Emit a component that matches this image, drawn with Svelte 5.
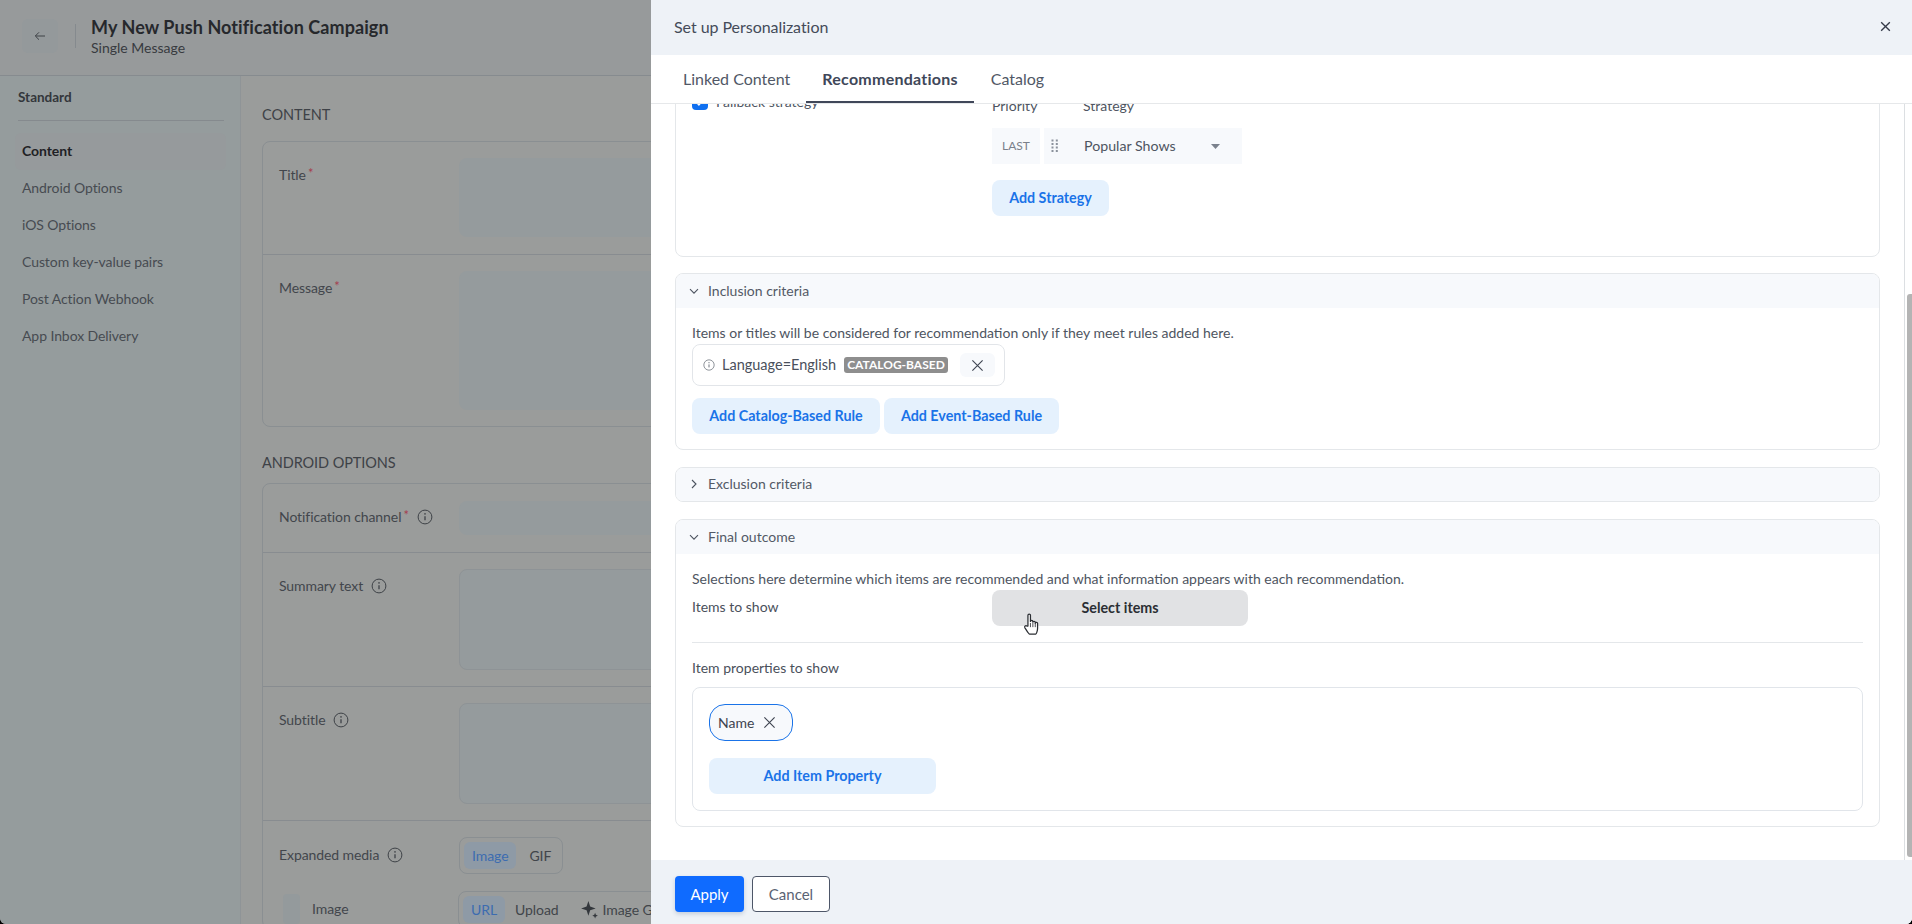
<script>
  const navItems = ['Content', 'Android Options', 'iOS Options', 'Custom key-value pairs', 'Post Action Webhook', 'App Inbox Delivery'];
  const tabs = ['Linked Content', 'Recommendations', 'Catalog'];
</script>

{#snippet info(size)}
  <svg class="info" width={size} height={size} viewBox="0 0 16 16" fill="none" stroke="currentColor">
    <circle cx="8" cy="8" r="6.9" stroke-width="1"/>
    <path d="M8 7.2v4" stroke-width="1.3"/>
    <circle cx="8" cy="4.9" r=".8" fill="currentColor" stroke="none"/>
  </svg>
{/snippet}

{#snippet cross(size, cls)}
  <svg class={cls} width={size} height={size} viewBox="0 0 14 14" fill="none" stroke="currentColor">
    <path d="M1.5 1.5l11 11M12.5 1.5l-11 11"/>
  </svg>
{/snippet}

{#snippet chevron(open)}
  <svg class="chev" width="12" height="12" viewBox="0 0 12 12" fill="none" stroke="currentColor" stroke-width="1.1">
    {#if open}<path d="M2 4.2l4 4 4-4"/>{:else}<path d="M4 2l4 4-4 4"/>{/if}
  </svg>
{/snippet}

<div class="page">
  <div class="base">
    <header class="top">
      <button class="back" aria-label="Back">
        <svg width="12" height="12" viewBox="0 0 12 12" fill="none" stroke="currentColor" stroke-width="1">
          <path d="M11 6H1.5M5 2.3L1.3 6 5 9.7"/>
        </svg>
      </button>
      <span class="vr"></span>
      <div class="titles">
        <div class="title">My New Push Notification Campaign</div>
        <div class="sub">Single Message</div>
      </div>
    </header>
    <div class="under">
      <aside class="side">
        <div class="side-h">Standard</div>
        <nav>
          {#each navItems as item, i}
            <div class="nav" class:active={i === 0}>{item}</div>
          {/each}
        </nav>
      </aside>
      <main class="main">
        <h2 class="sec first">CONTENT</h2>
        <section class="card">
          <div class="row r1"><div class="lab">Title<i>*</i></div><div class="inp h79"></div></div>
          <div class="row r2"><div class="lab">Message<i>*</i></div><div class="inp h139"></div></div>
        </section>
        <h2 class="sec second">ANDROID OPTIONS</h2>
        <section class="card">
          <div class="row r3"><div class="lab l6">Notification channel<i>*</i><span class="ic">{@render info(16)}</span></div><div class="inp h34"></div></div>
          <div class="row r2"><div class="lab">Summary text<span class="ic">{@render info(16)}</span></div><div class="inp line h101"></div></div>
          <div class="row r2"><div class="lab">Subtitle<span class="ic">{@render info(16)}</span></div><div class="inp line h101"></div></div>
          <div class="row r4">
            <div class="lab l8">Expanded media<span class="ic">{@render info(16)}</span></div>
            <div class="seg"><span class="on">Image</span><span>GIF</span></div>
          </div>
          <div class="row r5">
            <div class="lab2"><span class="sq"></span>Image</div>
            <div class="seg wide"><span class="on">URL</span><span>Upload</span>
              <span class="gen">
                <svg width="19" height="19" viewBox="0 0 17 17" fill="#33373c"><path d="M7.5 1l1.6 4.900L14 7.500 9.100 9.100 7.500 14 5.900 9.100 1 7.500l4.900-1.600z"/><path d="M13.500 11.500l.7 1.800 1.800.7-1.800.7-.7 1.800-.7-1.800-1.800-.7 1.800-.7z"/></svg>
                Image Generator
              </span>
            </div>
          </div>
        </section>
      </main>
    </div>
  </div>

  <div class="drawer">
    <div class="d-head">
      <span>Set up Personalization</span>
      {@render cross(11, 'close')}
    </div>
    <div class="d-tabs">
      {#each tabs as t, i}
        <div class="tab" class:sel={i === 1}>{t}</div>
      {/each}
    </div>
    <div class="d-body">
      <div class="scroll">
        <section class="box strat">
          <div class="fallback">
            <span class="check">
              <svg width="12" height="12" viewBox="0 0 12 12" fill="none" stroke="#fff" stroke-width="1.8"><path d="M2.500 6.200l2.400 2.400 4.600-5"/></svg>
            </span>
            Fallback strategy
          </div>
          <div class="strat-r">
            <div class="cols"><span class="c1">Priority</span><span>Strategy</span></div>
            <div class="pick">
              <span class="last">LAST</span>
              <span class="sel-box">
                <svg class="dots" width="8" height="16" viewBox="0 0 8 16" fill="#8b929c">
                  {#each [1.500, 5, 8.500, 12] as y}<rect x="0.5" {y} width="2" height="2"/><rect x="4.800" {y} width="2" height="2"/>{/each}
                </svg>
                <span class="opt">Popular Shows</span>
                <svg class="caret" width="9" height="5" viewBox="0 0 9 5" fill="#7b828d"><path d="M0 0h9L4.500 5z"/></svg>
              </span>
            </div>
            <button class="btn soft strat-btn">Add Strategy</button>
          </div>
        </section>

        <section class="box">
          <div class="box-h">{@render chevron(true)}Inclusion criteria</div>
          <div class="box-b inc">
            <p>Items or titles will be considered for recommendation only if they meet rules added here.</p>
            <div class="rule">
              <span class="ri">{@render info(12)}</span>
              <span class="rt">Language=English</span>
              <span class="badge">CATALOG-BASED</span>
              <span class="rx">{@render cross(13, 'x')}</span>
            </div>
            <div class="btns">
              <button class="btn soft w188">Add Catalog-Based Rule</button>
              <button class="btn soft w175">Add Event-Based Rule</button>
            </div>
          </div>
        </section>

        <section class="box">
          <div class="box-h shut">{@render chevron(false)}Exclusion criteria</div>
        </section>

        <section class="box">
          <div class="box-h">{@render chevron(true)}Final outcome</div>
          <div class="box-b final">
            <p>Selections here determine which items are recommended and what information appears with each recommendation.</p>
            <div class="items">
              <span>Items to show</span>
              <button class="btn grey">Select items</button>
            </div>
            <hr />
            <div class="prop-l">Item properties to show</div>
            <div class="props">
              <span class="pill">Name{@render cross(13, 'px')}</span>
              <button class="btn soft add">Add Item Property</button>
            </div>
          </div>
        </section>
      </div>
      <div class="track"><span class="thumb"></span></div>
    </div>
    <div class="d-foot">
      <button class="apply">Apply</button>
      <button class="cancel">Cancel</button>
    </div>
    <svg class="hand" width="17" height="22" viewBox="0 0 16 21" fill="#fff" stroke="#2b2e33" stroke-width="1.2" stroke-linejoin="round">
      <path d="M4.600 12.500V2.200c0-1.600 2.400-1.600 2.400 0V8c0-1.200 2.300-1.200 2.300 0v.8c0-1.200 2.300-1.200 2.300 0v.9c0-1.100 2.200-1.100 2.200.2v4.600c0 2.500-1.200 5.600-1.700 5.600H6.200c-1 0-3-3.800-4.500-6-.9-1.400.8-2.800 2-1.600z"/>
      <path d="M7 9.500v4M9.300 9.500v4M11.600 9.500v4" fill="none" stroke-width=".8"/>
    </svg>
  </div>
</div>

<style>
  :global(html), :global(body) { margin: 0; background: #000; }
  * { box-sizing: border-box; }
  .page {
    position: relative; width: 1912px; height: 924px; overflow: hidden;
    border-radius: 0 0 6px 6px;
    font: 14px/20px Lato, "Open Sans", sans-serif; background: #999c9c; color: #42464c;
  }
  button { font: inherit; cursor: pointer; border: 0; }

  .base { height: 100%; display: flex; flex-direction: column; }
  .top { height: 76px; flex: none; display: flex; align-items: center; padding: 0 0 4px 22px; background: #979a9b; border-bottom: 1px solid #868b8f; }
  .back { width: 36px; height: 34px; background: #94999b; border-radius: 6px; color: #3e4247; display: flex; align-items: center; justify-content: center; padding: 0; margin-right: 17px; }
  .vr { width: 1px; height: 24px; background: #858a8e; margin-right: 15px; }
  .title { font-size: 18px; line-height: 24px; font-weight: 700; color: #26282c; margin-top: 2px; letter-spacing: .08px; }
  .sub { color: #383b40; font-size: 14px; line-height: 20px; margin-top: -1px; }
  .under { flex: 1; display: flex; min-height: 0; }
  .side { width: 241px; flex: none; background: #959c9d; border-right: 1px solid #8f9497; padding: 11px 18px 0 15px; }
  .side-h { margin-left: 3px; font-weight: 700; font-size: 13.500px; color: #33363b; height: 34px; border-bottom: 1px solid #858a8e; width: 206px; }
  nav { margin-top: 12px; }
  .nav { height: 37px; line-height: 36px; padding-left: 7px; color: #474b51; width: 211px; letter-spacing: -.08px; }
  .nav.active { background: #969a9c; font-weight: 700; color: #1f2125; border-radius: 6px; }
  .main { flex: 1; padding: 29px 0 0 21px; background: #9a9c9b; min-width: 0; letter-spacing: -.08px; }
  .sec { margin: 0; font-size: 14.500px; line-height: 20px; font-weight: 400; color: #3e4247; }
  .sec.first { margin-bottom: 16px; }
  .sec.second { margin: 26px 0 10px; }
  .card { border: 1px solid #8a8f92; border-radius: 8px; margin-right: 20px; }
  .row { display: grid; grid-template-columns: 180px 1fr; padding: 16px; border-bottom: 1px solid #888c90; }
  .row:last-child { border-bottom: 0; }
  .r1 { height: 113px; }
  .r2 { padding-bottom: 16px; }
  .r3 { height: 69px; padding-top: 17px; }
  .r4 { padding-bottom: 17px; border-bottom: 0; }
  .r5 { padding: 0 16px 0 16px; grid-template-columns: 179px 1fr; }
  .lab { padding-top: 7px; color: #42464c; display: flex; align-items: flex-start; }
  .lab.l6 { padding-top: 6px; }
  .lab.l8 { padding-top: 8px; }
  .lab i { color: #a5404f; font-style: normal; margin-left: 2px; font-size: 13px; line-height: 16px; }
  .ic { margin-left: 8px; color: #3e4247; display: inline-flex; margin-top: 2px; }
  .inp { background: #959b9d; border-radius: 8px; }
  .inp.line { border: 1px solid #8e9396; }
  .h79 { height: 79px; } .h139 { height: 139px; } .h34 { height: 34px; } .h101 { height: 101px; }
  .seg { display: inline-flex; align-items: center; gap: 13px; border: 1px solid #8a8f92; border-radius: 8px; height: 37px; width: 104px; padding: 0 11px 0 4px; color: #41454a; white-space: nowrap; }
  .seg .on { background: #8e9aa6; color: #3c6cb0; border-radius: 6px; height: 27px; line-height: 27px; padding: 0 8px; }
  .seg.wide { width: 400px; gap: 10px; }
  .gen { display: inline-flex; align-items: center; gap: 4px; margin-left: 11px; }
  .lab2 { display: flex; align-items: center; height: 36px; color: #42464c; margin-left: 4px; }
  .sq { width: 17px; height: 30px; background: #949a9c; margin-right: 12px; border-radius: 4px; }

  .drawer { position: absolute; top: 0; right: 0; bottom: 0; width: 1261px; background: #fff; display: flex; flex-direction: column; }
  .d-head { height: 55px; flex: none; background: #eef2f7; display: flex; align-items: center; justify-content: space-between; padding: 0 21px 2px 23px; font-size: 16px; color: #444b59; letter-spacing: -.05px; }
  .close { color: #343a48; stroke-width: 1.700; }
  .x, .px { stroke-width: 1.200; }
  .d-tabs { height: 49px; flex: none; display: flex; border-bottom: 1px solid #e6e8ea; padding-left: 16px; position: relative; z-index: 2; background: #fff; }
  .tab { padding: 0 16px; line-height: 47px; height: 48px; font-size: 16px; color: #515866; }
  .tab.sel { font-weight: 700; color: #404759; border-bottom: 2px solid #404759; letter-spacing: .25px; margin-right: 1px; }
  .d-body { flex: 1; min-height: 0; display: flex; overflow: hidden; }
  .scroll { flex: 1; min-width: 0; display: flex; flex-direction: column; justify-content: flex-end; gap: 17px; padding: 0 24px 33px; }
  .track { width: 8px; flex: none; border-left: 1px solid #dcdfe2; position: relative; }
  .thumb { position: absolute; right: 0; top: 190px; bottom: 3px; width: 5px; background: #b4b4b4; border-radius: 3px 0 0 3px; }

  .box { flex: none; border: 1px solid #e4e7ea; border-radius: 8px; overflow: hidden; }
  .box-h { height: 34px; background: #f7f9fc; display: flex; align-items: center; padding: 0 0 1px 12px; color: #535a66; font-size: 14px; }
  .box-h.shut { height: 33px; }
  .chev { margin-right: 8px; color: #4d5460; }
  .box-b { padding: 0 16px; color: #4e5561; }
  p { margin: 0; }
  .inc { padding-top: 15px; padding-bottom: 15px; }
  .strat { display: flex; padding: 12px 16px 40px; margin-bottom: -1px; }
  .fallback { width: 300px; height: 20px; display: flex; align-items: center; gap: 8px; color: #4e5561; margin-top: -2px; }
  .check { width: 16px; height: 16px; background: #1070f0; border-radius: 4px; display: flex; align-items: center; justify-content: center; }
  .strat-r { padding-top: 2px; }
  .cols { display: flex; height: 20px; line-height: 19px; color: #4e5561; }
  .c1 { width: 91px; }
  .pick { display: flex; gap: 4px; margin-top: 12px; height: 36px; }
  .last { width: 48px; background: #f7f9fc; color: #7a808a; font-size: 12px; text-align: center; line-height: 36px; }
  .sel-box { width: 198px; background: #f7f9fc; display: flex; align-items: center; padding-left: 7px; color: #4e5561; }
  .opt { margin-left: 25px; width: 127px; font-size: 14.200px; line-height: 19px; margin-bottom: 1px; }
  .btn { height: 36px; border-radius: 8px; font-weight: 700; font-size: 14.300px; padding: 0; display: block; }
  .soft { background: #e5f1fd; color: #1a73e8; }
  .strat-btn { width: 117px; margin-top: 16px; }
  .rule { display: flex; align-items: center; width: 313px; height: 42px; margin-top: 1px; border: 1px solid #e2e5e9; border-radius: 8px; padding-left: 10px; }
  .ri { display: inline-flex; color: #6a7079; }
  .rt { margin-left: 7px; color: #4a505b; width: 122px; font-size: 14.500px; white-space: nowrap; }
  .badge { width: 104px; height: 16px; background: #8e8e8e; color: #fff; font-size: 12px; line-height: 16px; font-weight: 700; text-align: center; border-radius: 3px; white-space: nowrap; }
  .rx { margin-left: 12px; width: 35px; height: 24px; background: #f7f9fc; border-radius: 6px; display: flex; align-items: center; justify-content: center; color: #3f4552; }
  .btns { display: flex; gap: 4px; margin-top: 12px; }
  .w188 { width: 188px; } .w175 { width: 175px; }
  .final { padding-top: 15px; padding-bottom: 15px; }
  .items { display: flex; margin-top: 1px; }
  .items span { width: 300px; line-height: 34px; color: #4a505b; }
  .grey { background: #e1e2e4; color: #2b2e33; width: 256px; line-height: 34px; }
  hr { border: 0; border-top: 1px solid #e4e7ea; margin: 16px 0 15px; }
  .prop-l { color: #4a505b; }
  .props { margin-top: 9px; border: 1px solid #e1e5ea; border-radius: 8px; padding: 16px; }
  .pill { display: inline-flex; align-items: center; height: 37px; width: 84px; padding-left: 8px; gap: 9px; border: 1px solid #1a73e8; border-radius: 16px; background: #f7f9fc; color: #3e4450; vertical-align: top; }
  .px { color: #3e4450; }
  .add { width: 227px; margin-top: 17px; }
  .d-foot { height: 64px; flex: none; background: #eef2f7; display: flex; gap: 8px; padding: 16px 24px 0; }
  .apply, .cancel { height: 36px; border-radius: 4px; font-size: 15px; }
  .apply { width: 69px; background: #0f6bff; color: #fff; box-shadow: 0 2px 4px rgba(30, 60, 110, .2); }
  .cancel { width: 78px; background: #fff; border: 1px solid #4d5668; color: #5a6373; }
  .hand { position: absolute; left: 372px; top: 613px; }
</style>
